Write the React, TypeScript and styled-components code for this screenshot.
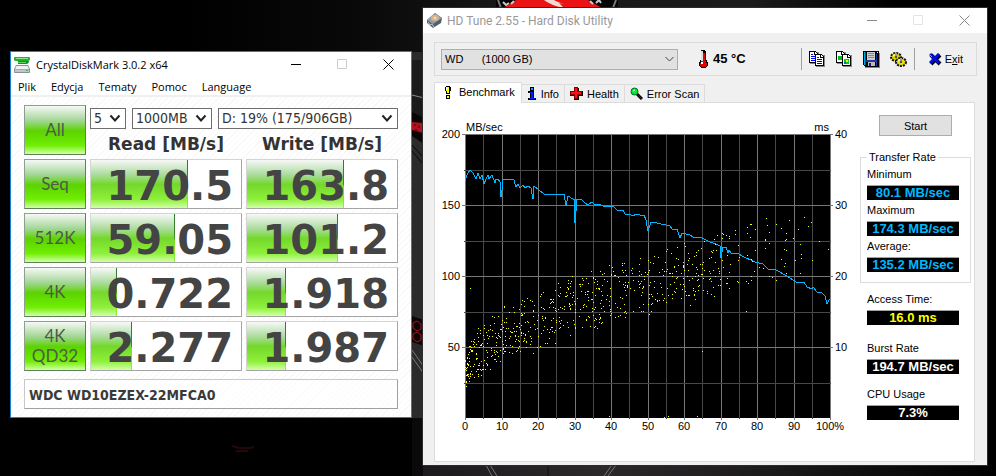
import React from "react";
import styled, { createGlobalStyle, css } from "styled-components";

const GlobalStyle = createGlobalStyle`
  * { box-sizing: border-box; }
  body { margin: 0; background: #000; }
  button, select { font: inherit; color: inherit; margin: 0; }
`;

const uiFont = `"Open Sans", "Noto Sans", sans-serif`;
const tahoma = `"DejaVu Sans Condensed", "DejaVu Sans", sans-serif`;
const verdana = `"DejaVu Sans", sans-serif`;
const arial = `"Liberation Sans", Arial, sans-serif`;

/* ---------- desktop ---------- */

const Desktop = styled.main`
  position: relative;
  display: grid;
  grid-template-columns: 402fr 564fr;
  align-items: start;
  gap: 11px;
  min-height: 100vh;
  padding: 8px 9px 11px 10px;
  background: #000;
  overflow: hidden;
`;

const WallpaperSvg = styled.svg`
  position: absolute;
  inset: 0;
  width: 100%;
  height: 100%;
`;

function Wallpaper() {
  return (
    <WallpaperSvg viewBox="0 0 996 476" preserveAspectRatio="xMidYMin slice" aria-hidden="true">
      <defs>
        <linearGradient id="shade" x1="0" x2="1">
          <stop offset="0" stopColor="#000" />
          <stop offset="0.22" stopColor="#090909" />
          <stop offset="0.4" stopColor="#181818" />
          <stop offset="0.7" stopColor="#1b1b1b" />
          <stop offset="0.88" stopColor="#000" />
        </linearGradient>
        <linearGradient id="floor" x1="0" x2="1">
          <stop offset="0" stopColor="#1c1a1c" />
          <stop offset="0.3" stopColor="#2c292b" />
          <stop offset="0.6" stopColor="#1c1b1c" />
          <stop offset="1" stopColor="#000" />
        </linearGradient>
      </defs>
      <rect width="996" height="476" fill="#000" />
      <rect x="180" width="816" height="52" fill="url(#shade)" />
      <path d="M412 52h12v424h-12z" fill="#2b2b2b" />
      <path d="M412 60h12v60l-12-2z" fill="#1b1b1b" />
      <path d="M412 95l12 3" stroke="#8a8a8a" />
      <path d="M412 112l12 6v26l-12-8z" fill="#0b0404" />
      <path d="M412 122l11 1v10l-11-3z" fill="#b3101d" />
      <path d="M414 125h2m2 2h2m-5 3h2" stroke="#3c0508" />
      <path d="M412 145l12 13M412 151l12 14" stroke="#050505" />
      <path d="M412 316l12 4v26l-12-4z" fill="#120405" />
      <path d="M413 323l4-2 4 3v5l-4 2-4-3zM413 334l4-2 4 3v5l-4 2-4-3z" fill="none" stroke="#a01824" />
      <path d="M412 350l12 17M412 357l12 17" stroke="#777" />
      <path d="M412 418h11v58h-11z" fill="#0a0a0a" />
      <path d="M423 465h573v11H423z" fill="url(#floor)" />
      <path d="M486 465l6 11M490 465l7 11M604 476l8-11M608 476l8-11" stroke="#77757a" />
      <path d="M548 465v11" stroke="#0e0e0e" />
      <path d="M496 0h122v8H496z" fill="#050505" />
      <path d="M498 0l3 8M616 0l-3 8" stroke="#777" strokeWidth="2" />
      <path d="M516 0h72l14 8H503z" fill="#ea1315" />
      <path d="M544 0q6 5 20 8l-5-5 5 1q-7-2-10-4z" fill="#f5d9d0" />
      <path d="M503 2l3 3 3-2M511 4l3-3M590 1l3 3M596 3l3-3 2 3" fill="none" stroke="#c8c8c8" strokeWidth="2" />
      <path d="M232 446q12 4 22 1M236 451h12" stroke="#22080b" strokeWidth="2" fill="none" />
    </WallpaperSvg>
  );
}

/* ---------- shared window parts ---------- */

const Caption = styled.div`
  display: flex;
  flex: none;
  align-items: center;
`;

const CaptionButton = styled.button`
  display: grid;
  place-items: center;
  width: 46px;
  height: 24px;
  padding: 0;
  border: 0;
  background: transparent;
`;

function CaptionButtons({ ink, faint }: { ink: string; faint: string }) {
  return (
    <Caption>
      <CaptionButton aria-label="Minimize">
        <svg width="11" height="11"><path d="M0 5.5h10" stroke={ink} /></svg>
      </CaptionButton>
      <CaptionButton aria-label="Maximize" disabled>
        <svg width="11" height="11"><path d="M.5.5h9v9h-9z" stroke={faint} fill="none" /></svg>
      </CaptionButton>
      <CaptionButton aria-label="Close">
        <svg width="11" height="11"><path d="M.5.5l10 10m0-10l-10 10" stroke={ink} /></svg>
      </CaptionButton>
    </Caption>
  );
}

/* ---------- CrystalDiskMark ---------- */

const MarkWindow = styled.section`
  position: relative;
  min-width: 0;
  margin-top: 43px;
  border: 1px solid #1883d7;
  background: #fff;
`;

const MarkTitle = styled.header`
  display: flex;
  align-items: center;
  height: 25px;
  padding-left: 3px;
  font: 11px/24px ${uiFont};
  color: #000;
  h1 { flex: 1; margin: 0 0 0 5px; font: inherit; white-space: nowrap; }
`;

const MenuBar = styled.nav`
  display: flex;
  gap: 15px;
  height: 20px;
  padding: 0 7px;
  border-bottom: 2px solid #f0f0f0;
  font: 11px/20px ${uiFont};
  button { padding: 0; border: 0; background: none; }
`;

const MarkBody = styled.div`
  padding: 8px 13px;
  background: repeating-linear-gradient(135deg, #fff 0 3px, #f8f8f8 3px 4px);
`;

const Results = styled.table`
  width: calc(100% + 8px);
  margin: -4px;
  border-spacing: 4px;
  table-layout: fixed;
  th, td { padding: 0; }
`;

const TestColumn = styled.col`
  width: 62px;
`;

const TestButton = styled.button`
  display: block;
  width: 100%;
  height: 50px;
  padding: 0;
  border: 1px solid #5c8058;
  border-top-color: #8f9f8f;
  border-left-color: #8f9f8f;
  background: linear-gradient(#f6faf6, #a4d698 30%, #5bd300 52%, #70ee02 82%, #d2ffa8);
  font: 17px/20px Lato, ${uiFont};
  color: #4c5c48;
  white-space: pre-line;
`;

const Pickers = styled.div`
  display: flex;
  gap: 6px;
  height: 24px;
  padding-top: 3px;
`;

const Picker = styled.span<{ $size: number }>`
  position: relative;
  display: flex;
  flex: ${(p) => p.$size} 1 0;
  min-width: 0;
  select {
    appearance: none;
    width: 100%;
    height: 21px;
    padding: 0 0 0 3px;
    border: 1px solid #6e6e6e;
    border-radius: 0;
    background: #fff;
    font: 14px/19px ${tahoma};
    color: #333;
  }
  svg { position: absolute; right: 4px; top: 6px; pointer-events: none; }
`;

const ColumnHead = styled.th`
  height: 22px;
  font: bold 17px/22px ${verdana};
  color: #333;
  white-space: nowrap;
`;

const Score = styled.div`
  position: relative;
  height: 50px;
  padding-right: 8px;
  border: 1px solid #a4a4a4;
  border-top-color: #d4d4d4;
  border-left-color: #d4d4d4;
  background: #fff;
  font: bold 40px/52px ${verdana};
  color: #444;
  text-align: right;
  overflow: hidden;
  output { position: relative; }
`;

const ScoreBar = styled.div`
  position: absolute;
  inset: 0 auto 0 0;
  border-right: 1px solid;
  border-image: linear-gradient(#2f7a2c, #3f8a2c 50%, #7be020 55%, #8ef038) 1;
  background: linear-gradient(#f8f8f8, #acdc9f 30%, #74d82c 51%, #8ef03a 82%, #d2ffa8);
`;

const DriveName = styled.p`
  height: 30px;
  margin: 8px 0 0;
  padding-left: 4px;
  border: 1px solid #a0a0a0;
  border-top-color: #c8c8c8;
  border-left-color: #c8c8c8;
  background: rgba(255, 255, 255, 0.6);
  font: bold 14px/30px ${tahoma};
  color: #3a3a3a;
`;

const tests = [
  { name: "Seq", read: ["170.5", 64.5], write: ["163.8", 64.5] },
  { name: "512K", read: ["59.05", 56], write: ["101.2", 60.5] },
  { name: "4K", read: ["0.722", 17], write: ["1.918", 26] },
  { name: "4K\nQD32", read: ["2.277", 27], write: ["1.987", 26] },
] as { name: string; read: [string, number]; write: [string, number] }[];

function Chevron() {
  return (
    <svg width="13" height="9"><path d="M1.5 1.5l4.5 5 4.5-5" fill="none" stroke="#222" strokeWidth="2" /></svg>
  );
}

function ScoreCell({ value }: { value: [string, number] }) {
  return (
    <td>
      <Score>
        <ScoreBar style={{ width: `${value[1]}%` }} />
        <output>{value[0]}</output>
      </Score>
    </td>
  );
}

function CrystalDiskMark() {
  return (
    <MarkWindow aria-label="CrystalDiskMark">
      <MarkTitle>
        <svg width="17" height="18" viewBox="0 0 17 18">
          <path d="M1 1h14q1 0 1 1v1q0 2-2 2H2Q0 5 0 3.500V2q0-1 1-1z" fill="#22b02c" />
          <path d="M2 2h12v1H2z" fill="#8fe890" />
          <path d="M4 5h11q0 3-3 3H4z" fill="#149020" />
          <path d="M4 6h8v1H4z" fill="#5fd866" />
          <path d="M2 9h12l2 4v3q0 1-1 1H1q-1 0-1-1v-3z" fill="#8b9096" />
          <path d="M2.500 10h11l1.500 3H1z" fill="#f0f2f4" />
          <path d="M1 13.500h14V16H1z" fill="#c2c7cc" />
          <path d="M12 14h2v1h-2z" fill="#2fce3a" />
        </svg>
        <h1>CrystalDiskMark 3.0.2 x64</h1>
        <CaptionButtons ink="#000" faint="#ccc" />
      </MarkTitle>
      <MenuBar>
        {["Plik", "Edycja", "Tematy", "Pomoc", "Language"].map((m) => (
          <button key={m}>{m}</button>
        ))}
      </MenuBar>
      <MarkBody>
        <Results>
          <colgroup><TestColumn /><col /><col /></colgroup>
          <thead>
            <tr>
              <td rowSpan={2}><TestButton>All</TestButton></td>
              <td colSpan={2}>
                <Pickers>
                  <Picker $size={36}>
                    <select aria-label="Test count"><option>5</option></select>
                    <Chevron />
                  </Picker>
                  <Picker $size={80}>
                    <select aria-label="Test size"><option>1000MB</option></select>
                    <Chevron />
                  </Picker>
                  <Picker $size={180}>
                    <select aria-label="Drive"><option>D: 19% (175/906GB)</option></select>
                    <Chevron />
                  </Picker>
                </Pickers>
              </td>
            </tr>
            <tr>
              <ColumnHead scope="col">Read [MB/s]</ColumnHead>
              <ColumnHead scope="col">Write [MB/s]</ColumnHead>
            </tr>
          </thead>
          <tbody>
            {tests.map((t) => (
              <tr key={t.name}>
                <th scope="row"><TestButton>{t.name}</TestButton></th>
                <ScoreCell value={t.read} />
                <ScoreCell value={t.write} />
              </tr>
            ))}
          </tbody>
        </Results>
        <DriveName>WDC WD10EZEX-22MFCA0</DriveName>
      </MarkBody>
    </MarkWindow>
  );
}

/* ---------- HD Tune ---------- */

const TuneWindow = styled.section`
  position: relative;
  min-width: 0;
  background: #f0f0f0;
  box-shadow: 0 0 0 1px #2c2c2c;
  font: 11px/14px ${arial};
  color: #000;
`;

const TuneTitle = styled.header`
  display: flex;
  align-items: center;
  height: 25px;
  padding-left: 3px;
  background: #fff;
  font: 12px/24px Roboto, ${uiFont};
  color: #999;
  h1 { flex: 1; margin: 0 0 0 4px; font: inherit; white-space: nowrap; }
`;

const TuneBody = styled.div`
  padding: 9px 10px 3px 11px;
`;

const Toolbar = styled.div`
  display: flex;
  align-items: center;
  height: 34px;
  padding: 0 13px 0 6px;
  border: 1px solid #dcdcdc;
`;

const DriveSelect = styled.span`
  position: relative;
  flex: 0 1 237px;
  select {
    appearance: none;
    display: block;
    width: 100%;
    height: 21px;
    padding: 0 3px;
    border: 1px solid #adadad;
    border-radius: 0;
    background: #e1e1e1;
    font: 11px/19px ${arial};
    white-space: pre;
  }
  svg { position: absolute; right: 4px; top: 7px; pointer-events: none; }
`;

const Temperature = styled.span`
  display: flex;
  flex: 1;
  align-items: center;
  gap: 5px;
  margin-left: 20px;
  font: bold 13px/18px ${arial};
`;

const Tools = styled.div`
  display: flex;
  align-items: center;
  gap: 10px;
  height: 22px;
  padding: 0 7px;
  border-left: 1px solid #a0a0a0;
  border-right: 1px solid #a0a0a0;
`;

const ToolButton = styled.button`
  display: flex;
  align-items: center;
  gap: 3px;
  padding: 0;
  border: 0;
  background: none;
`;

const ExitButton = styled(ToolButton)`
  margin-left: 14px;
`;

const Tabs = styled.div`
  display: flex;
  align-items: flex-end;
  height: 20px;
  margin-top: 6px;
`;

const activeTab = css`
  position: relative;
  height: 21px;
  margin-bottom: -1px;
  border-left-width: 1px;
  background: #fff;
  padding: 0 6px 2px 7px;
  gap: 5px;
`;

const Tab = styled.button<{ $active?: boolean }>`
  display: flex;
  align-items: center;
  gap: 4px;
  height: 18px;
  padding: 0 5px;
  border: 1px solid #dcdcdc;
  border-width: 1px 1px 0 0;
  background: #f0f0f0;
  font: 11px/16px ${arial};
  white-space: nowrap;
  ${(p) => p.$active && activeTab}
`;

const Panel = styled.div`
  display: flex;
  align-items: flex-start;
  min-height: 360px;
  margin-right: 2px;
  border: 1px solid #dcdcdc;
  background: #fff;
`;

const Chart = styled.svg`
  flex: 1;
  min-width: 0;
  height: auto;
  text { font: 11px ${arial}; fill: #000; }
`;

const Side = styled.aside`
  flex: none;
  width: 111px;
  margin: 12px 3px 0 0;
`;

const StartButton = styled.button`
  display: block;
  width: 73px;
  height: 21px;
  margin: 0 auto;
  padding: 0;
  border: 1px solid #adadad;
  background: #e1e1e1;
  font: 11px/18px ${arial};
`;

const RateGroup = styled.fieldset`
  margin: 14px 0 9px;
  padding: 3px 6px 10px;
  border: 1px solid #dcdcdc;
  legend { padding: 0 2px; }
`;

const Readings = styled.div`
  padding: 0 7px;
`;

const Reading = styled.div<{ $ink: string; $after?: number }>`
  display: flex;
  flex-direction: column;
  width: 92px;
  margin-bottom: ${(p) => p.$after ?? 0}px;
  output {
    height: 15px;
    margin-top: 4px;
    border-top: 1px solid #a0a0a0;
    background: #000;
    font: bold 13px/14px ${arial};
    color: ${(p) => p.$ink};
    text-align: center;
  }
`;

/* Plot origin inside the chart drawing, and the plot's extent. */
const OX = 30;
const OY = 31;
const PW = 365;
const PH = 284;

const speed =
  "0,47 2,41 5,36 8,39 10,43 11,45 13,39 15,45 17,41 19,50 21,45 23,41 24,45 27,41 30,49 31,45 33,45 35,48 36,63 37,56 38,45 49,46 51,53 53,50 55,54 58,51 60,54 63,52 66,54 68,65 69,52 79,60 99,60 101,72 103,62 108,65 109,65 110,89 112,65 117,66 120,69 123,71 127,68 129,70 136,71 138,72 147,73 148,72 153,77 158,76 160,80 165,80 167,82 172,80 175,81 179,81 181,86 183,97 186,88 192,89 205,92 207,95 212,95 215,104 217,99 225,101 228,103 237,104 245,108 251,110 255,112 256,124 258,113 261,113 263,119 264,116 266,119 273,119 277,122 290,128 298,130 303,135 311,136 322,142 328,146 333,149 339,148 342,153 347,155 348,153 352,158 356,158 360,162 362,170 364,166 365,165";

const farSeeks: [number, number][] = [
  [257, 99], [258, 100], [261, 101], [264, 102], [264, 104], [270, 100], [270, 96], [257, 104], [273, 111],
  [282, 99], [282, 93], [285, 90], [286, 90], [285, 103], [290, 95], [301, 84], [302, 91], [311, 90], [316, 94],
  [324, 86], [321, 99], [321, 105], [320, 106], [328, 104], [304, 98], [300, 105], [300, 106], [304, 109],
  [300, 114], [319, 115], [321, 116], [335, 110], [339, 83], [346, 88], [343, 92], [333, 95], [336, 120],
  [336, 124], [330, 126], [347, 126], [354, 107], [363, 115], [320, 129], [319, 132], [316, 125], [286, 125],
  [290, 116], [282, 121], [287, 127], [294, 133], [289, 137], [286, 142], [298, 134], [304, 135], [307, 143],
  [304, 142], [335, 139], [321, 139], [311, 146], [281, 147], [286, 146], [283, 149], [273, 126], [265, 130],
  [274, 123], [262, 121], [264, 138], [258, 133], [257, 126], [262, 144], [273, 148], [262, 149], [264, 154],
  [281, 177], [261, 149], [272, 147], [237, 217], [232, 282], [203, 282], [199, 283], [144, 282], [5, 154],
  [255, 151], [254, 139],
];

/* Envelope of the access-time cloud, as x, top, bottom. */
const envelope = [
  [0, 216, 260], [8, 196, 248], [18, 182, 241], [50, 160, 226], [100, 140, 206],
  [150, 124, 194], [180, 118, 184], [230, 104, 172], [258, 96, 158],
];

function cloud(count: number): [number, number][] {
  let seed = 20117;
  const rnd = () => {
    seed = (seed * 16807) % 2147483647;
    return seed / 2147483647;
  };
  return Array.from({ length: count }, () => {
    const x = 256 * Math.pow(rnd(), 1.4);
    const i = envelope.findIndex((e) => e[0] > x);
    const [x0, t0, b0] = envelope[i - 1];
    const [x1, t1, b1] = envelope[i];
    const k = (x - x0) / (x1 - x0);
    const top = t0 + (t1 - t0) * k;
    const bottom = b0 + (b1 - b0) * k;
    const spread = (rnd() + rnd() * 0.25) / 1.25;
    return [Math.round(x), Math.round(top + (bottom - top) * spread)];
  });
}

const seeks = [...cloud(660), ...farSeeks];

function BenchmarkChart() {
  const cols = Array.from({ length: 21 }, (_, i) => i);
  const rows = Array.from({ length: 9 }, (_, i) => i);
  const px = (i: number) => OX + Math.round((PW * i) / 20);
  const py = (i: number) => OY + Math.round((PH * i) / 8);
  return (
    <Chart viewBox="0 0 425 340" role="img" aria-label="Transfer rate and access time">
      <g shapeRendering="crispEdges">
        <rect x={OX} y={OY} width={PW} height={PH} fill="#000" />
        {cols.map((i) => (
          <rect key={i} x={px(i)} y={OY} width="1" height={PH + (i % 2 ? 1 : 2)} fill={i % 2 ? "#484848" : "#777"} />
        ))}
        {rows.slice(0, 8).map((i) => (
          <rect
            key={i}
            x={OX - (i % 2 ? 1 : 3)}
            y={py(i)}
            width={PW + (i % 2 ? 2 : 6)}
            height="1"
            fill={i % 2 ? "#484848" : "#777"}
          />
        ))}
        <path d={seeks.map(([x, y]) => `M${OX + x} ${OY + y}h1v1h-1z`).join("")} fill="#ff0" />
        <polyline
          transform={`translate(${OX} ${OY})`}
          points={speed}
          fill="none"
          stroke="#00b7ff"
          strokeWidth="1"
        />
      </g>
      <text x="31" y="28">MB/sec</text>
      <text x="394" y="28" textAnchor="end">ms</text>
      {[200, 150, 100, 50].map((v, i) => (
        <text key={v} x="25" y={py(i * 2) + 4} textAnchor="end">{v}</text>
      ))}
      {[40, 30, 20, 10].map((v, i) => (
        <text key={v} x="400" y={py(i * 2) + 4}>{v}</text>
      ))}
      {cols.filter((i) => i % 2 === 0).map((i) => (
        <text key={i} x={px(i)} y="327" textAnchor="middle">{i * 5}{i === 20 ? "%" : ""}</text>
      ))}
    </Chart>
  );
}

const Pixels = styled.svg.attrs({ shapeRendering: "crispEdges" })`
  flex: none;
  display: block;
`;

function PageShape({ x, y }: { x: number; y: number }) {
  return (
    <g transform={`translate(${x} ${y})`}>
      <path d="M1 1h9v12H1z" fill="#888" />
      <path d="M0 0h6l3 3v9H0z" fill="#000" />
      <path d="M1 1h4v3h3v7H1z" fill="#fff" />
      <path d="M6 1l2 2H6z" fill="#fff" />
    </g>
  );
}

function CopyIcon({ picture }: { picture?: boolean }) {
  return (
    <Pixels width="17" height="17">
      <PageShape x={0} y={0} />
      {picture ? <path d="M2 5h4v4H2z" fill="#00c020" /> : <path d="M2 3h2v1H2zM2 5h5v1H2zM2 7h5v1H2zM2 9h5v1H2z" fill="#00f" />}
      <PageShape x={6} y={3} />
      {picture ? (
        <g><path d="M8 8h5v5H8z" fill="#00d020" /><path d="M10 9h2v2h-2z" fill="#ff0" /><path d="M8 11h2v2H8z" fill="#06c" /></g>
      ) : (
        <path d="M8 6h2v1H8zM8 8h5v1H8zM8 10h5v1H8zM8 12h5v1H8z" fill="#00f" />
      )}
    </Pixels>
  );
}

function SaveIcon() {
  return (
    <Pixels width="17" height="17">
      <path d="M2 2h15v15H2z" fill="#888" />
      <path d="M0 0h16v16H2l-2-2z" fill="#000" />
      <path d="M1 1h2v13H1zM13 3h1v12h-1zM3 9h10v2H3z" fill="#2038a0" />
      <path d="M1 1h1v13H1z" fill="#00a8e0" />
      <path d="M4 1h8v8H4z" fill="#ccc" />
      <path d="M5 2h6v1H5zM5 4h6v1H5zM5 6h6v1H5z" fill="#888" />
      <path d="M5 11h7v4H5z" fill="#bbb" />
      <path d="M6 12h2v3H6z" fill="#102080" />
      <path d="M14 1h1v1h-1z" fill="#fff" />
    </Pixels>
  );
}

function GearsIcon() {
  return (
    <svg width="17" height="17">
      <ellipse cx="6" cy="6" rx="5" ry="4" fill="#d8cc00" stroke="#111" strokeWidth="2" strokeDasharray="2 1" />
      <ellipse cx="11" cy="11" rx="5" ry="4" fill="#e8dc00" stroke="#111" strokeWidth="2" strokeDasharray="2 1" />
      <path d="M3 5l3-2M8 10l3-2" stroke="#ff6" strokeWidth="2" />
      <path d="M6 2v5M11 7v5" stroke="#555" strokeWidth="2" />
      <path d="M6 2v3M11 7v3" stroke="#ddd" />
    </svg>
  );
}

function HdTune() {
  return (
    <TuneWindow aria-label="HD Tune">
      <TuneTitle>
        <svg width="17" height="17">
          <path d="M9 1l7 5-1 5-8 5-6-5V8z" fill="#4f5f6f" />
          <path d="M9 1l7 5-9 6-6-4z" fill="#93a0aa" />
          <ellipse cx="9" cy="6" rx="4" ry="3" fill="#d9b48c" />
          <path d="M2 10l2 3 2-1 2 3" stroke="#c2cbd2" fill="none" />
          <circle cx="9" cy="6" r="1" fill="#f8efe0" />
        </svg>
        <h1>HD Tune 2.55 - Hard Disk Utility</h1>
        <CaptionButtons ink="#888" faint="#e4e4e4" />
      </TuneTitle>
      <TuneBody>
        <Toolbar>
          <DriveSelect>
            <select aria-label="Drive">
              <option>{"WD\u00a0\u00a0\u00a0\u00a0\u00a0\u00a0(1000 GB)"}</option>
            </select>
            <svg width="9" height="7"><path d="M.5 1l4 4 4-4" fill="none" stroke="#444" /></svg>
          </DriveSelect>
          <Temperature>
            <Pixels width="10" height="18">
              <path d="M3 0h4v1h1v9h1v2h1v4H9v1H8v1H3v-1H2v-1H1v-4h1v-2h1z" fill="#000" />
              <path d="M3 1h2v10H3z" fill="#ddd" />
              <path d="M5 3h2v8h1v2h1v3H8v1H3v-1H2v-3h1v-2h2z" fill="#e80000" />
              <path d="M3 12h2v2H3z" fill="#fff" />
            </Pixels>
            45 °C
          </Temperature>
          <Tools>
            <ToolButton aria-label="Copy text"><CopyIcon /></ToolButton>
            <ToolButton aria-label="Copy screenshot"><CopyIcon picture /></ToolButton>
            <ToolButton aria-label="Save screenshot"><SaveIcon /></ToolButton>
            <ToolButton aria-label="Options"><GearsIcon /></ToolButton>
          </Tools>
          <ExitButton>
            <svg width="13" height="13">
              <path d="M2 2l9 9M11 2l-9 9" stroke="#000" strokeWidth="4" />
              <path d="M1 1l9 9M10 1l-9 9" stroke="#0010e0" strokeWidth="3" />
              <path d="M0 1l3 3" stroke="#3cf" />
            </svg>
            <span>E<u>x</u>it</span>
          </ExitButton>
        </Toolbar>
        <Tabs role="tablist">
          <Tab $active role="tab" aria-selected="true">
            <Pixels width="12" height="13">
              <path d="M4 0h4v1h1v4H8v3H4V5H3V1h1zM4 9h4v4H4z" fill="#000" />
              <path d="M4 1h3v4H4zM5 5h2v2H5zM5 10h2v2H5z" fill="#ff0" />
              <path d="M4 1h1v2H4z" fill="#fff" />
            </Pixels>
            Benchmark
          </Tab>
          <Tab role="tab" aria-selected="false">
            <Pixels width="10" height="13">
              <path d="M3 0h4v4H3zM1 4h6v7h2v2H1v-2h2V6H1z" fill="#000" />
              <path d="M4 1h2v2H4z" fill="#0af" />
              <path d="M2 5h4v6h2v1H2v-1h2V6H2z" fill="#0020f0" />
            </Pixels>
            Info
          </Tab>
          <Tab role="tab" aria-selected="false">
            <Pixels width="13" height="13">
              <path d="M4 1h5v3h4v5H9v4H4V9H0V4h4z" fill="#000" />
              <path d="M4 0h4v4h4v4H8v4H4V8H0V4h4z" fill="#800" />
              <path d="M5 1h2v4h4v2H7v4H5V7H1V5h4z" fill="#ff1010" />
            </Pixels>
            Health
          </Tab>
          <Tab role="tab" aria-selected="false">
            <svg width="13" height="13">
              <path d="M6 6l6 6" stroke="#000" strokeWidth="3" />
              <path d="M8 8l4 4" stroke="#0020e0" />
              <circle cx="4.500" cy="4.500" r="3.500" fill="#0e2" stroke="#064" />
              <path d="M3 4l2-1" stroke="#fff" />
            </svg>
            Error Scan
          </Tab>
        </Tabs>
        <Panel role="tabpanel">
          <BenchmarkChart />
          <Side>
            <StartButton>Start</StartButton>
            <RateGroup>
              <legend>Transfer Rate</legend>
              <Reading $ink="#00b7ff" $after={3}>Minimum<output>80.1 MB/sec</output></Reading>
              <Reading $ink="#00b7ff" $after={3}>Maximum<output>174.3 MB/sec</output></Reading>
              <Reading $ink="#00b7ff">Average:<output>135.2 MB/sec</output></Reading>
            </RateGroup>
            <Readings>
              <Reading $ink="#ff0" $after={16}>Access Time:<output>16.0 ms</output></Reading>
              <Reading $ink="#fff" $after={13}>Burst Rate<output>194.7 MB/sec</output></Reading>
              <Reading $ink="#fff">CPU Usage<output>7.3%</output></Reading>
            </Readings>
          </Side>
        </Panel>
      </TuneBody>
    </TuneWindow>
  );
}

export default function App() {
  return (
    <>
      <GlobalStyle />
      <Desktop>
        <Wallpaper />
        <CrystalDiskMark />
        <HdTune />
      </Desktop>
    </>
  );
}
